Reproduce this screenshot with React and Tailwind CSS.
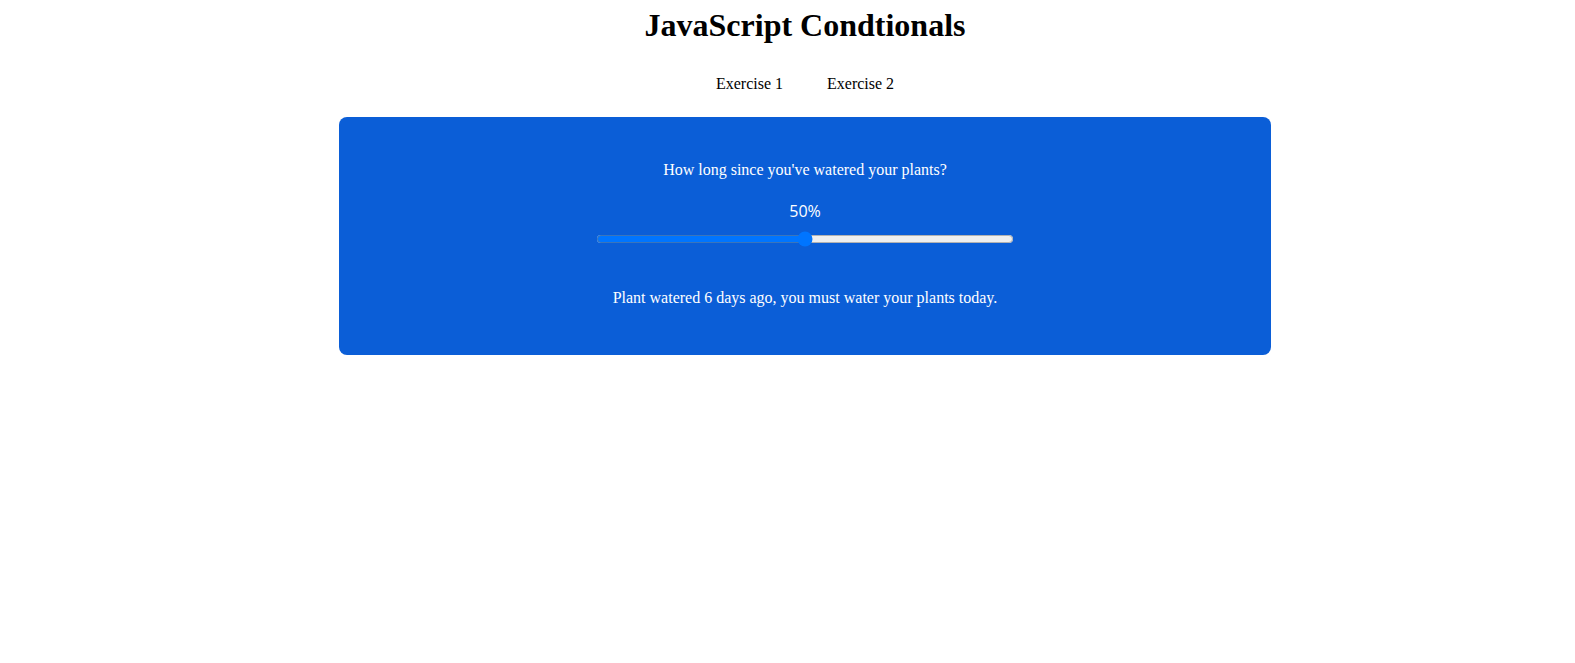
import { useState } from 'react'

export default function App() {
  const [value, setValue] = useState(50)
  const days = Math.round(value / 100 * 12)

  return (
    <div className="min-h-screen bg-white pl-[35px] text-black" style={{ fontFamily: '"Liberation Serif", "Times New Roman", serif' }}>
      <h1 className="pt-[7px] text-center text-[32px] font-bold leading-[37px]">JavaScript Condtionals</h1>

      <nav className="mt-[31px] flex justify-center gap-[44px] text-[16px] leading-[18px]">
        <a className="cursor-pointer">Exercise 1</a>
        <a className="cursor-pointer">Exercise 2</a>
      </nav>

      <div className="mx-auto mt-[24px] flex w-[932px] flex-col items-center rounded-lg bg-[#0b5ed7] pt-[44px] pb-[48px] text-center text-white">
        <p className="text-[16px] leading-[18px]">How long since you've watered your plants?</p>
        <span className="mt-[21px] text-[16px] leading-[22px]" style={{ fontFamily: '"Open Sans", "Noto Sans", sans-serif' }}>
          {value}%
        </span>
        <input
          type="range"
          min="0"
          max="100"
          value={value}
          onChange={e => setValue(Number(e.target.value))}
          className="m-0 mt-[9px] block h-4 w-[418px]"
        />
        <p className="mt-[42px] text-[16px] leading-[18px]">
          Plant watered {days} days ago, you must water your plants today.
        </p>
      </div>
    </div>
  )
}
